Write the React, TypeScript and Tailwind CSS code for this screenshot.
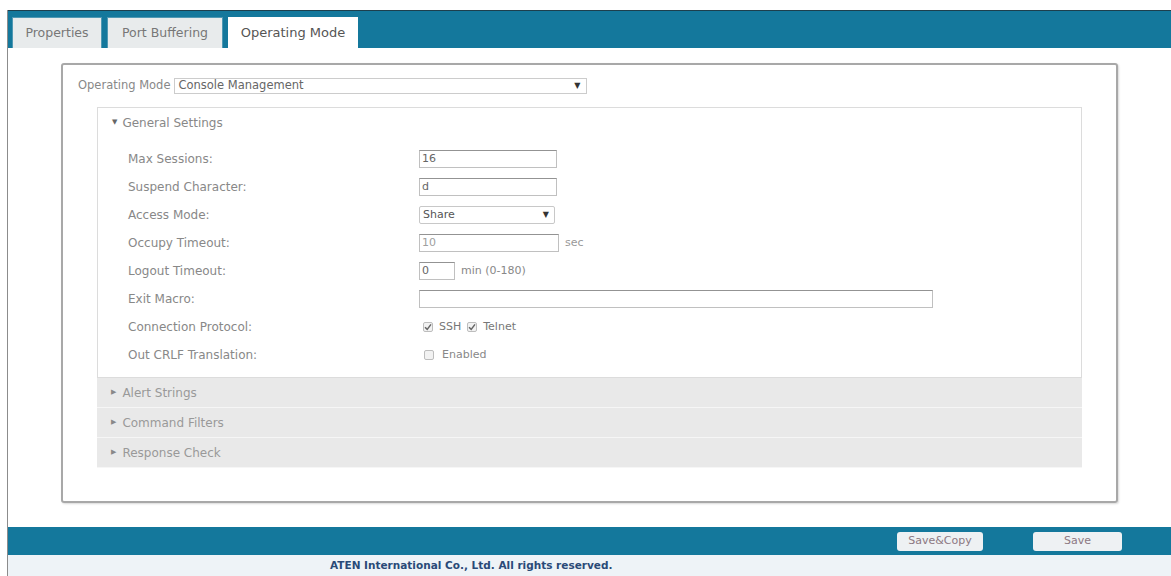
import React from "react";

const rows = [
  { label: "Max Sessions:", kind: "text", value: "16" },
  { label: "Suspend Character:", kind: "text", value: "d" },
  { label: "Access Mode:", kind: "select", value: "Share" },
  { label: "Occupy Timeout:", kind: "disabled", value: "10" },
  { label: "Logout Timeout:", kind: "short", value: "0" },
  { label: "Exit Macro:", kind: "wide", value: "" },
  { label: "Connection Protocol:", kind: "protocol", value: "" },
  { label: "Out CRLF Translation:", kind: "crlf", value: "" },
];

function Check({ on }: { on: boolean }) {
  return (
    <span className="w-[10px] h-[10px] border border-[#bdbdbd] bg-[#f2f2f2] rounded-[2px] flex items-center justify-center">
      {on && (
        <svg width="8" height="8" viewBox="0 0 8 8">
          <path d="M1 4.2 L3.2 6.4 L7 1.4" stroke="#666" strokeWidth="1.5" fill="none" />
        </svg>
      )}
    </span>
  );
}

function Field({ kind, value }: { kind: string; value: string }) {
  const box = "h-[18px] border border-[#c0c0c0] border-t-[#939393] bg-white flex items-center pl-[2px] text-[11px] text-[#666]";
  if (kind === "text") return <div className={`${box} w-[138px]`}>{value}</div>;
  if (kind === "select")
    return (
      <div className="h-[18px] w-[136px] border border-[#c8c8c8] rounded-[2px] bg-white flex items-center justify-between pl-[3px] pr-[5px] text-[11px] text-[#555]">
        <span>{value}</span>
        <span className="text-[8px] text-[#333]">▼</span>
      </div>
    );
  if (kind === "disabled")
    return (
      <div className="flex items-center gap-[6px]">
        <div className={`${box} w-[140px] bg-[#e6e6e3] text-[#a0a0a0]`}>{value}</div>
        <span className="text-[11px] text-[#999]">sec</span>
      </div>
    );
  if (kind === "short")
    return (
      <div className="flex items-center gap-[6px]">
        <div className={`${box} w-[36px]`}>{value}</div>
        <span className="text-[11px] text-[#888]">min (0-180)</span>
      </div>
    );
  if (kind === "wide") return <div className={`${box} w-[514px]`}>{value}</div>;
  if (kind === "protocol")
    return (
      <div className="flex items-center gap-[6px] pl-[4px] text-[11px] text-[#777]">
        <Check on />
        <span>SSH</span>
        <Check on />
        <span>Telnet</span>
      </div>
    );
  return (
    <div className="flex items-center gap-[8px] pl-[5px] text-[11px] text-[#888]">
      <Check on={false} />
      <span>Enabled</span>
    </div>
  );
}

export default function App() {
  return (
    <div className="w-[1171px] h-[576px] bg-white flex flex-col overflow-hidden font-['DejaVu_Sans',sans-serif]">
      <div className="h-[10px] shrink-0" />
      <div className="ml-[7px] flex-1 flex flex-col border-l border-[#8c8c8c]">
        {/* tab strip */}
        <div className="h-[38px] shrink-0 bg-[#14789c] border-t border-[#1d3f4d] flex items-end pl-[4px] gap-[5px]">
          <div className="h-[31px] w-[90px] bg-[#e8ebec] border border-[#4f98b3] border-b-0 flex items-center justify-center text-[12.5px] text-[#777]">
            Properties
          </div>
          <div className="h-[31px] w-[116px] bg-[#e8ebec] border border-[#4f98b3] border-b-0 flex items-center justify-center text-[12.5px] text-[#777]">
            Port Buffering
          </div>
          <div className="h-[31px] w-[130px] bg-white flex items-center justify-center text-[13px] text-[#555]">
            Operating Mode
          </div>
        </div>

        {/* content */}
        <div className="flex-1 pl-[53px] pt-[15px]">
          <div className="w-[1057px] h-[440px] border-2 border-[#a8a8a8] rounded-[3px] shadow-[1px_1px_2px_rgba(0,0,0,0.15)] pt-[13px]">
            <div className="flex items-center pl-[15px] h-[16px]">
              <span className="text-[11.5px] text-[#888] mr-[4px]">Operating Mode</span>
              <div className="h-[16px] w-[413px] border border-[#cccccc] flex items-center justify-between pl-[3px] pr-[6px] text-[11.5px] text-[#666]">
                <span>Console Management</span>
                <span className="text-[8px] text-[#333]">▼</span>
              </div>
            </div>

            <div className="ml-[34px] mt-[13px] w-[985px]">
              <div className="border border-[#dcdcdc] pb-[8px]">
                <div className="h-[29px] flex items-center pl-[14px] text-[12px] text-[#888]">
                  <span className="text-[7px] mr-[5px] text-[#666]">▼</span>
                  General Settings
                </div>
                <div className="pt-[8px]">
                  {rows.map((r) => (
                    <div key={r.label} className="h-[28px] flex items-center">
                      <div className="w-[321px] pl-[30px] text-[12px] text-[#888]">{r.label}</div>
                      <Field kind={r.kind} value={r.value} />
                    </div>
                  ))}
                </div>
              </div>
              {["Alert Strings", "Command Filters", "Response Check"].map((t) => (
                <div
                  key={t}
                  className="h-[30px] bg-[#e9e9e9] border-b border-[#f6f6f6] flex items-center pl-[14px] text-[12px] text-[#999]"
                >
                  <span className="text-[7px] mr-[6px] text-[#888]">▶</span>
                  {t}
                </div>
              ))}
            </div>
          </div>
        </div>

        {/* bottom bar */}
        <div className="h-[28px] shrink-0 bg-[#14789c] flex items-center justify-end pr-[49px] gap-[50px]">
          <button className="h-[19px] w-[86px] bg-[#eef1f3] rounded-[3px] text-[11px] text-[#8c7882]">
            Save&amp;Copy
          </button>
          <button className="h-[19px] w-[89px] bg-[#eef1f3] rounded-[3px] text-[11px] text-[#8c7882]">
            Save
          </button>
        </div>
        <div className="h-[21px] shrink-0 bg-[#eef3f7] flex items-center pl-[322px]">
          <span className="text-[10.5px] font-bold text-[#2a4a78]">ATEN International Co., Ltd. All rights reserved.</span>
        </div>
      </div>
    </div>
  );
}
